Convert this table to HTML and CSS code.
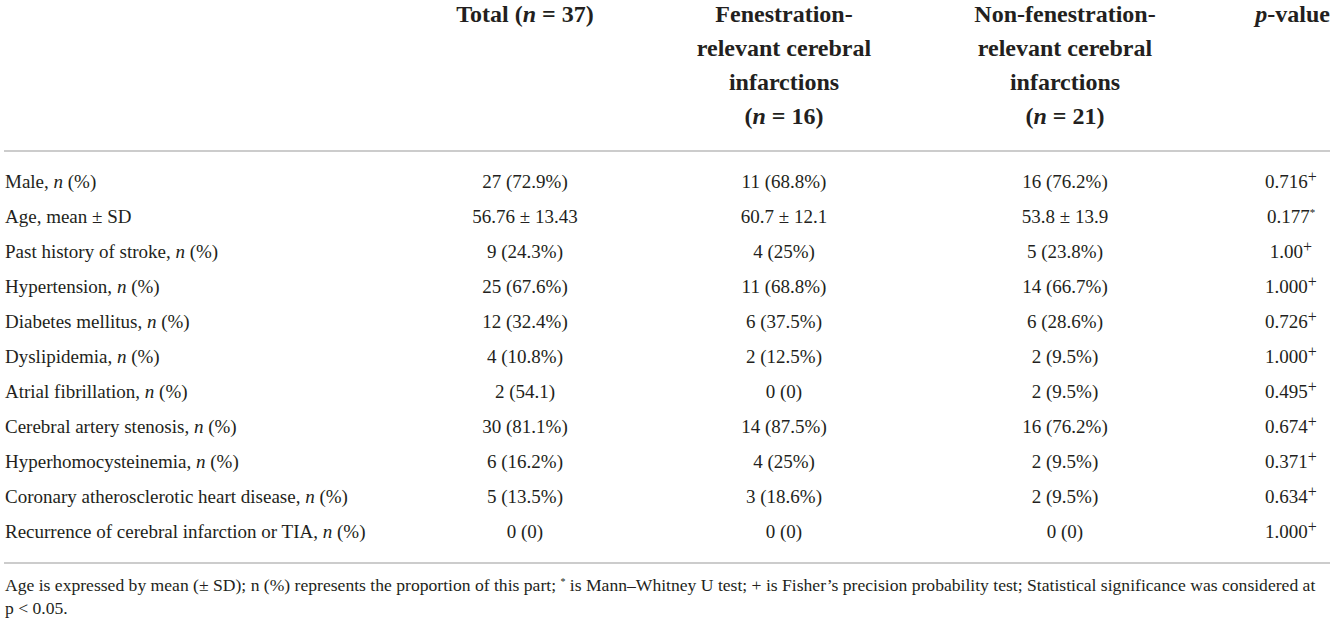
FILE: index.html
```html
<!DOCTYPE html>
<html lang="en">
<head>
  <meta charset="UTF-8" />
  <meta name="viewport" content="width=device-width, initial-scale=1.0">
  <title>Baseline characteristics</title>
  <link rel="stylesheet" href="styles.css">
</head>
<body>

  <div class="table-box">
    <table class="data-table">
      <colgroup>
        <col class="col-label">
        <col class="col-total">
        <col class="col-fen">
        <col class="col-nonfen">
        <col class="col-p">
      </colgroup>
      <thead>
        <tr>
          <th></th>
          <th>Total (<i>n</i> = 37)</th>
          <th>Fenestration-<br>relevant cerebral<br>infarctions<br>(<i>n</i> = 16)</th>
          <th>Non-fenestration-<br>relevant cerebral<br>infarctions<br>(<i>n</i> = 21)</th>
          <th class="p-head"><i>p</i>-value</th>
        </tr>
      </thead>
      <tbody>
        <tr>
          <td>Male, <i>n</i> (%)</td>
          <td>27 (72.9%)</td>
          <td>11 (68.8%)</td>
          <td>16 (76.2%)</td>
          <td class="p-cell">0.716<sup>+</sup></td>
        </tr>
        <tr>
          <td>Age, mean &plusmn; SD</td>
          <td>56.76 &plusmn; 13.43</td>
          <td>60.7 &plusmn; 12.1</td>
          <td>53.8 &plusmn; 13.9</td>
          <td class="p-cell">0.177<sup class="star">*</sup></td>
        </tr>
        <tr>
          <td>Past history of stroke, <i>n</i> (%)</td>
          <td>9 (24.3%)</td>
          <td>4 (25%)</td>
          <td>5 (23.8%)</td>
          <td class="p-cell">1.00<sup>+</sup></td>
        </tr>
        <tr>
          <td>Hypertension, <i>n</i> (%)</td>
          <td>25 (67.6%)</td>
          <td>11 (68.8%)</td>
          <td>14 (66.7%)</td>
          <td class="p-cell">1.000<sup>+</sup></td>
        </tr>
        <tr>
          <td>Diabetes mellitus, <i>n</i> (%)</td>
          <td>12 (32.4%)</td>
          <td>6 (37.5%)</td>
          <td>6 (28.6%)</td>
          <td class="p-cell">0.726<sup>+</sup></td>
        </tr>
        <tr>
          <td>Dyslipidemia, <i>n</i> (%)</td>
          <td>4 (10.8%)</td>
          <td>2 (12.5%)</td>
          <td>2 (9.5%)</td>
          <td class="p-cell">1.000<sup>+</sup></td>
        </tr>
        <tr>
          <td>Atrial fibrillation, <i>n</i> (%)</td>
          <td>2 (54.1)</td>
          <td>0 (0)</td>
          <td>2 (9.5%)</td>
          <td class="p-cell">0.495<sup>+</sup></td>
        </tr>
        <tr>
          <td>Cerebral artery stenosis, <i>n</i> (%)</td>
          <td>30 (81.1%)</td>
          <td>14 (87.5%)</td>
          <td>16 (76.2%)</td>
          <td class="p-cell">0.674<sup>+</sup></td>
        </tr>
        <tr>
          <td>Hyperhomocysteinemia, <i>n</i> (%)</td>
          <td>6 (16.2%)</td>
          <td>4 (25%)</td>
          <td>2 (9.5%)</td>
          <td class="p-cell">0.371<sup>+</sup></td>
        </tr>
        <tr>
          <td>Coronary atherosclerotic heart disease, <i>n</i> (%)</td>
          <td>5 (13.5%)</td>
          <td>3 (18.6%)</td>
          <td>2 (9.5%)</td>
          <td class="p-cell">0.634<sup>+</sup></td>
        </tr>
        <tr>
          <td>Recurrence of cerebral infarction or TIA, <i>n</i> (%)</td>
          <td>0 (0)</td>
          <td>0 (0)</td>
          <td>0 (0)</td>
          <td class="p-cell">1.000<sup>+</sup></td>
        </tr>
      </tbody>
    </table>

    <p class="table-note">Age is expressed by mean (&plusmn; SD); n (%) represents the proportion of this part; <sup class="star">*</sup> is Mann&ndash;Whitney U test; + is Fisher&rsquo;s precision probability test; Statistical significance was considered at p &lt; 0.05.</p>
  </div>

</body>
</html>
```

FILE: styles.css
```css
body {
  margin: 0;
  padding: 0 4px;
  background: #fff;
  color: #231f20;
  font-family: "Liberation Serif", "Times New Roman", serif;
}

.table-box {
  width: 1326px;
}

.data-table {
  width: 100%;
  table-layout: fixed;
  border-collapse: collapse;
  margin-top: -3px;
}

.col-label { width: 396px; }
.col-total { width: 250px; }
.col-fen { width: 268px; }
.col-nonfen { width: 294px; }
.col-p { width: 118px; }

th {
  font-size: 24px;
  line-height: 34px;
  font-weight: bold;
  text-align: center;
  vertical-align: top;
  padding: 0 0 17px;
  border-bottom: 2px solid #cccccc;
}

th.p-head {
  text-align: right;
  white-space: nowrap;
}

td {
  font-size: 19px;
  line-height: 35px;
  text-align: center;
  padding: 0;
  white-space: nowrap;
}

td:first-child {
  text-align: left;
  padding-left: 1px;
}

td.p-cell {
  padding-left: 40px;
}

tbody tr:first-child td {
  padding-top: 12px;
}

tbody tr:last-child td {
  padding-bottom: 13px;
  border-bottom: 2px solid #cccccc;
}

sup {
  font-size: 16px;
  line-height: 0;
  vertical-align: 6px;
}

sup.star {
  font-size: 11px;
  vertical-align: 7px;
}

.table-note {
  width: 1320px;
  margin: 10px 0 0;
  padding-left: 1px;
  font-size: 17.6px;
  line-height: 23px;
}

.table-note .star {
  font-size: 10px;
  vertical-align: 6px;
}
```
